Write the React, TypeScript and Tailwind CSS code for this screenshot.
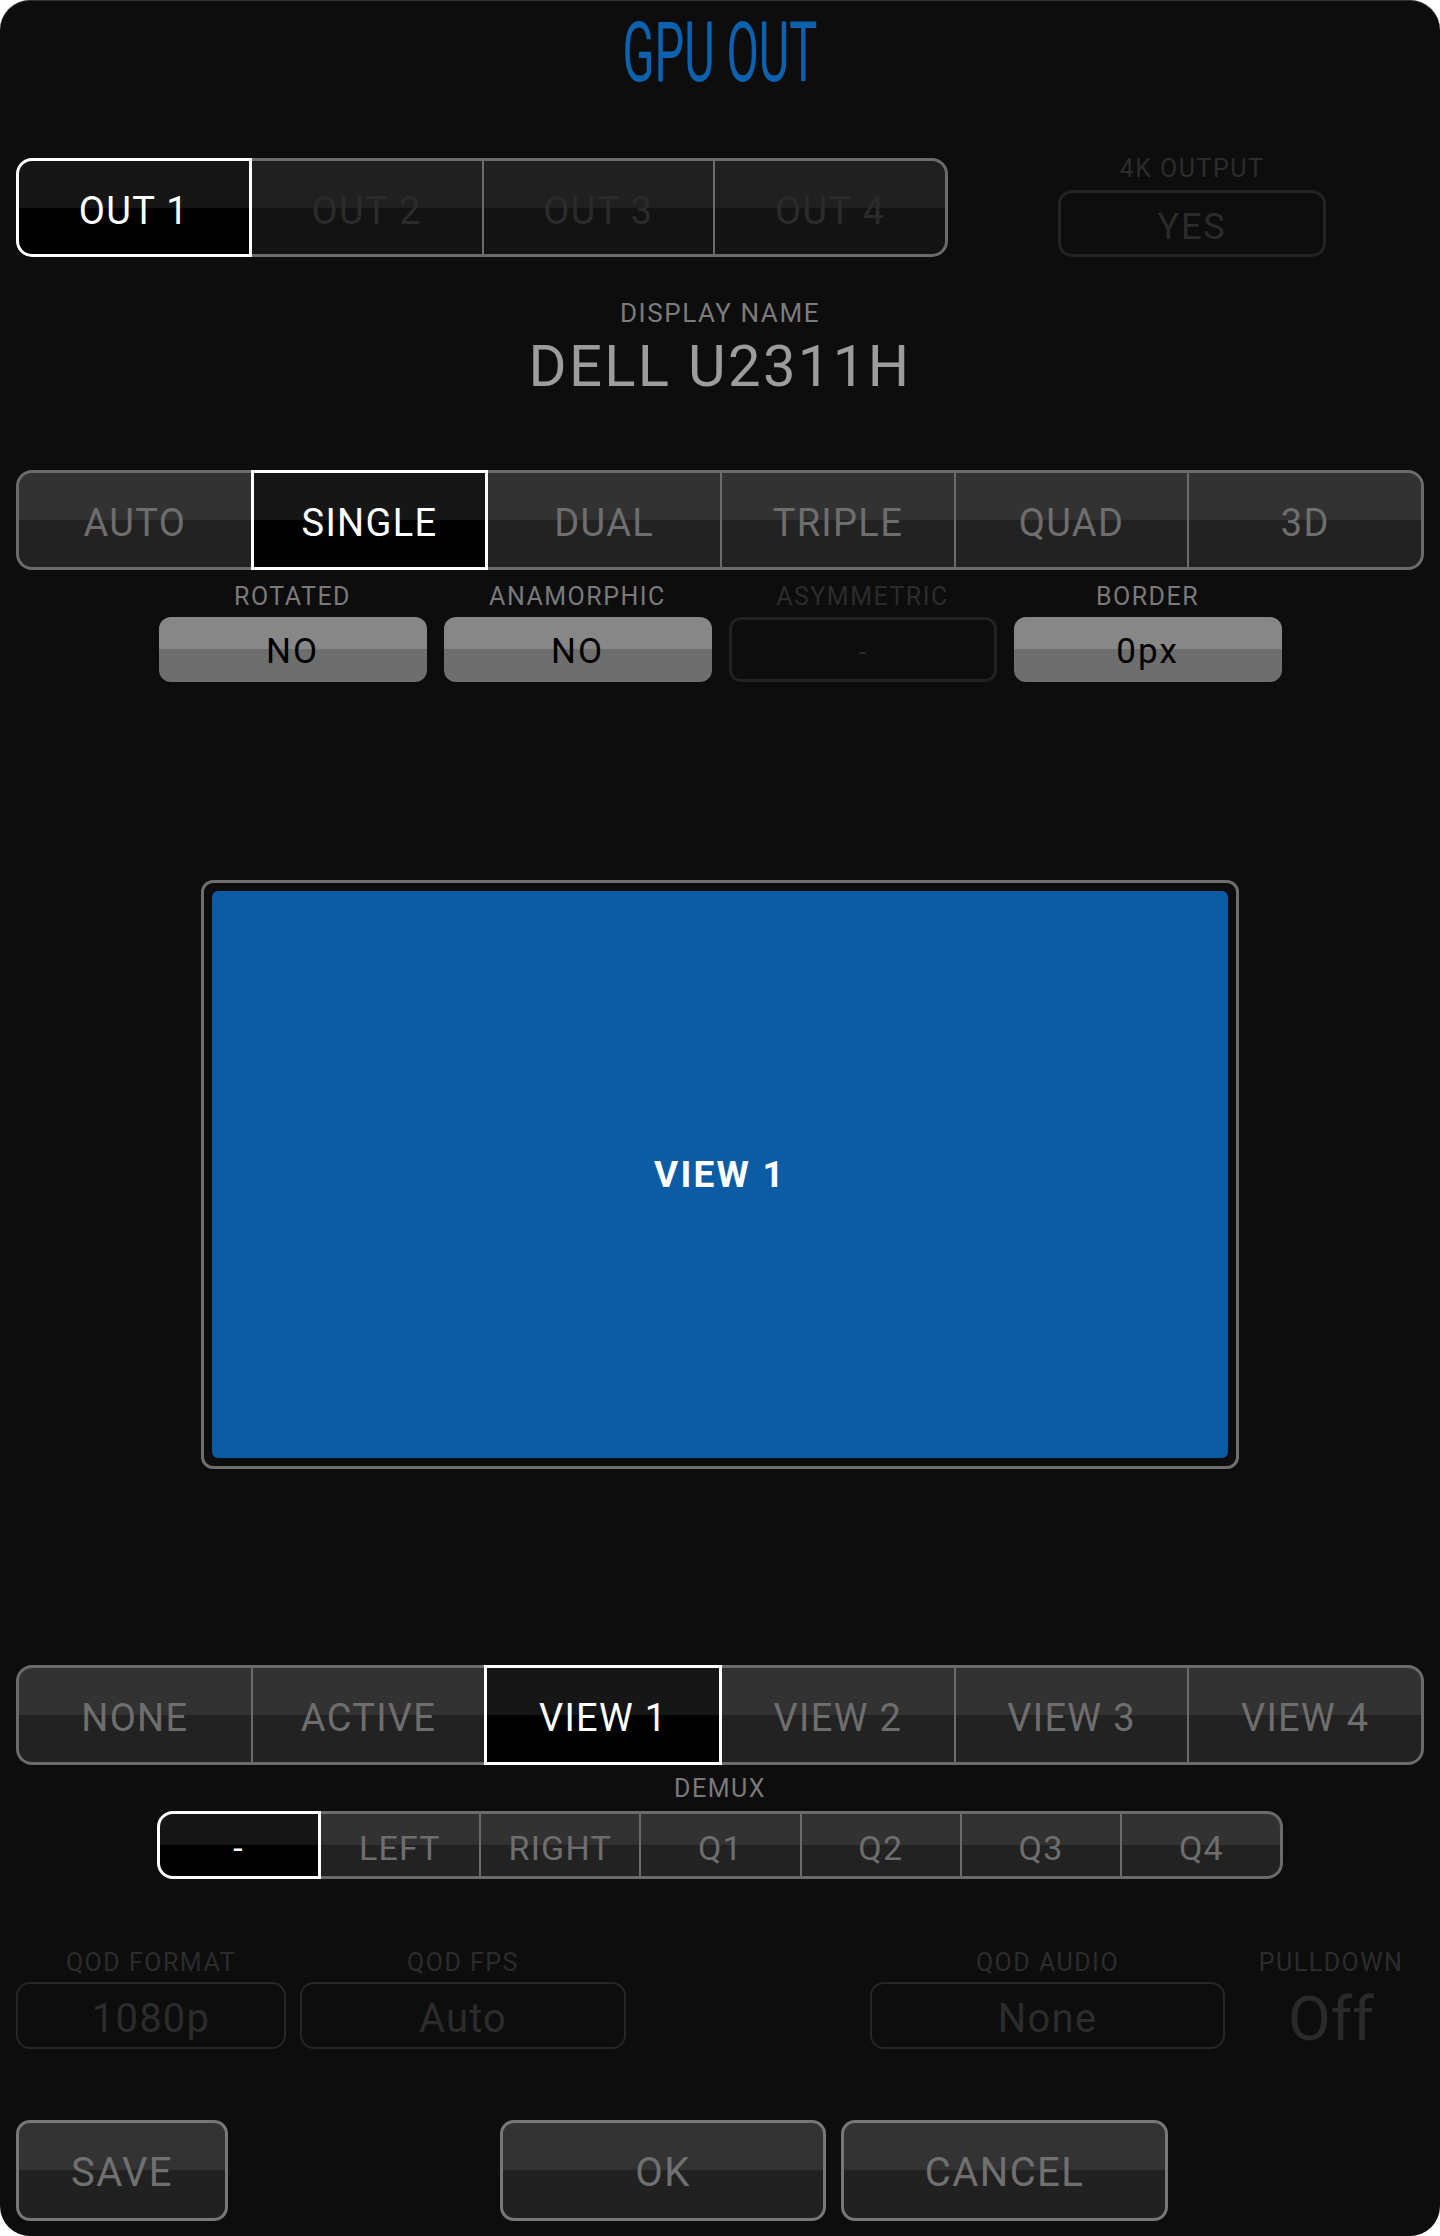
import React from 'react';

type SegmentedProps = {
  items: string[];
  active: number;
  dim?: boolean;
  className?: string;
};

function Segmented({ items, active, dim, className = '' }: SegmentedProps) {
  return (
    <div className={`flex ${className}`}>
      {items.map((label, i) => {
        const first = i === 0;
        const last = i === items.length - 1;
        const on = i === active;
        let cls = 'flex flex-1 items-center justify-center pt-[7px] tracking-[0.035em] ';
        if (on) {
          cls += 'border-[3px] border-white text-white bg-[linear-gradient(to_bottom,#161616_50%,#000000_50%)] ';
        } else {
          cls += 'border-y-[3px] border-[#6b6b6b] ';
          cls += dim
            ? 'text-[#2b2b2b] bg-[linear-gradient(to_bottom,#202020_50%,#131313_50%)] '
            : 'text-[#6e6e6e] bg-[linear-gradient(to_bottom,#323232_50%,#222222_50%)] ';
          if (first) cls += 'border-l-[3px] ';
          else if (i !== active + 1) cls += 'border-l-2 ';
          if (last) cls += 'border-r-[3px] ';
        }
        if (first) cls += 'rounded-l-[16px] ';
        if (last) cls += 'rounded-r-[16px] ';
        return (
          <div key={label} className={cls}>
            {label}
          </div>
        );
      })}
    </div>
  );
}

function Label({ children, dim }: { children: React.ReactNode; dim?: boolean }) {
  return (
    <div
      className={`flex h-[20px] items-center justify-center text-[25px] leading-none tracking-[0.06em] ${
        dim ? 'text-[#2c2c2c]' : 'text-[#7a7a7a]'
      }`}
    >
      {children}
    </div>
  );
}

function GrayButton({ children }: { children: React.ReactNode }) {
  return (
    <div className="mt-[11px] flex h-[65px] items-center justify-center rounded-[12px] bg-[linear-gradient(to_bottom,#878787_50%,#6e6e6e_50%)] pt-[6px] text-[35px] tracking-[0.06em] text-black">
      {children}
    </div>
  );
}

function DimBox({ children, className = '' }: { children: React.ReactNode; className?: string }) {
  return (
    <div
      className={`mt-[10px] flex h-[67px] items-center justify-center rounded-[14px] border-2 border-[#262626] pt-[7px] text-[40px] tracking-[0.03em] text-[#2c2c2c] ${className}`}
    >
      {children}
    </div>
  );
}

function ActionButton({ children, className = '' }: { children: React.ReactNode; className?: string }) {
  return (
    <div
      className={`flex h-[101px] items-center justify-center rounded-[14px] border-[3px] border-[#777777] bg-[linear-gradient(to_bottom,#333333_50%,#212121_50%)] pt-[5px] text-[40px] tracking-[0.035em] text-[#707070] ${className}`}
    >
      {children}
    </div>
  );
}

export default function App() {
  return (
    <div className="min-h-screen bg-white">
      <div className="flex h-[2236px] w-[1440px] flex-col rounded-[30px] border-t border-[#333333] bg-[#0d0d0d] px-4 font-['Roboto','Liberation_Sans',sans-serif]">
        {/* title */}
        <div className="flex h-[103px] items-center justify-center">
          <h1 className="scale-x-[0.56] text-[84px] font-normal leading-none text-[#0d62b0]">GPU OUT</h1>
        </div>

        {/* outputs + 4k */}
        <div className="mt-[54px] flex h-[99px]">
          <Segmented
            items={['OUT 1', 'OUT 2', 'OUT 3', 'OUT 4']}
            active={0}
            dim
            className="w-[932px] text-[38px]"
          />
          <div className="ml-[110px] flex w-[268px] flex-col">
            <Label dim>4K OUTPUT</Label>
            <div className="mt-[12px] flex h-[67px] items-center justify-center rounded-[14px] border-[3px] border-[#232323] pt-[6px] text-[36px] tracking-[0.05em] text-[#2b2b2b]">
              YES
            </div>
          </div>
        </div>

        {/* display name */}
        <div className="mt-[41px] flex h-[30px] items-center justify-center text-[26px] leading-none tracking-[0.06em] text-[#7c7c7c]">
          DISPLAY NAME
        </div>
        <div className="mt-[8px] flex h-[60px] items-center justify-center text-[58px] leading-none tracking-[0.04em] text-[#9c9c9c]">
          DELL U2311H
        </div>

        {/* layout mode */}
        <Segmented
          items={['AUTO', 'SINGLE', 'DUAL', 'TRIPLE', 'QUAD', '3D']}
          active={1}
          className="mt-[74px] h-[100px] text-[38px]"
        />

        {/* options */}
        <div className="mx-auto mt-[16px] grid w-[1123px] grid-cols-4 gap-x-[17px]">
          <div className="flex flex-col">
            <Label>ROTATED</Label>
            <GrayButton>NO</GrayButton>
          </div>
          <div className="flex flex-col">
            <Label>ANAMORPHIC</Label>
            <GrayButton>NO</GrayButton>
          </div>
          <div className="flex flex-col">
            <Label dim>ASYMMETRIC</Label>
            <div className="mt-[11px] flex h-[65px] items-center justify-center rounded-[12px] border-[3px] border-[#222222] pt-[6px] text-[26px] text-[#2c2c2c]">
              -
            </div>
          </div>
          <div className="flex flex-col">
            <Label>BORDER</Label>
            <GrayButton>0px</GrayButton>
          </div>
        </div>

        {/* preview */}
        <div className="mx-auto mt-[198px] flex h-[589px] w-[1038px] rounded-[12px] border-[3px] border-[#6e6e6e] p-[8px]">
          <div className="flex flex-1 items-center justify-center rounded-[6px] bg-[#0b5ca5]">
            <span className="text-[37px] font-bold tracking-[0.06em] text-white">VIEW 1</span>
          </div>
        </div>

        {/* view select */}
        <Segmented
          items={['NONE', 'ACTIVE', 'VIEW 1', 'VIEW 2', 'VIEW 3', 'VIEW 4']}
          active={2}
          className="mt-[196px] h-[100px] text-[38px]"
        />

        <div className="mt-[13px]">
          <Label>DEMUX</Label>
        </div>
        <Segmented
          items={['-', 'LEFT', 'RIGHT', 'Q1', 'Q2', 'Q3', 'Q4']}
          active={0}
          className="mx-auto mt-[13px] h-[68px] w-[1127px] text-[34px]"
        />

        {/* qod */}
        <div className="mt-[73px] flex">
          <div className="flex w-[270px] flex-col">
            <Label dim>QOD FORMAT</Label>
            <DimBox>1080p</DimBox>
          </div>
          <div className="ml-[14px] flex w-[326px] flex-col">
            <Label dim>QOD FPS</Label>
            <DimBox>Auto</DimBox>
          </div>
          <div className="ml-[244px] flex w-[355px] flex-col">
            <Label dim>QOD AUDIO</Label>
            <DimBox>None</DimBox>
          </div>
          <div className="ml-[13px] flex w-[186px] flex-col">
            <Label dim>PULLDOWN</Label>
            <div className="mt-[10px] flex h-[67px] items-center justify-center pt-[6px] text-[62px] leading-none text-[#2a2a2a]">
              Off
            </div>
          </div>
        </div>

        {/* actions */}
        <div className="mt-[71px] flex">
          <ActionButton className="w-[212px]">SAVE</ActionButton>
          <ActionButton className="ml-[272px] w-[326px]">OK</ActionButton>
          <ActionButton className="ml-[15px] w-[327px]">CANCEL</ActionButton>
        </div>
      </div>
    </div>
  );
}
